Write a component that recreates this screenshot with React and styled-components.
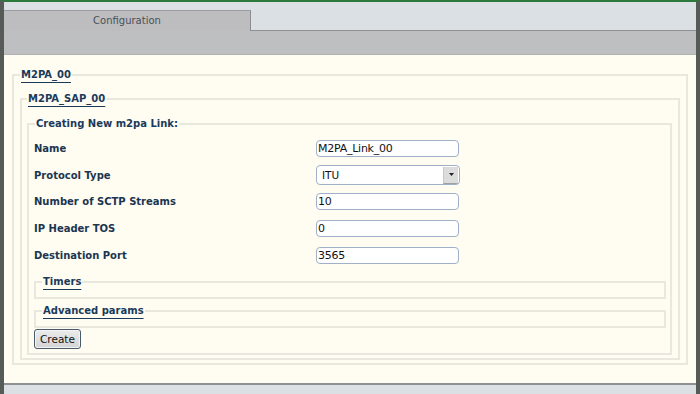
import React from 'react';
import styled, { createGlobalStyle } from 'styled-components';

const GlobalStyle = createGlobalStyle`
  html, body {
    margin: 0;
    padding: 0;
    background: #dae0e4;
  }
`

const Frame = styled.div`
  width: 700px;
  height: 394px;
  box-sizing: border-box;
  border-top: 2px solid #2b7a3c;
  border-left: 4px solid #575b57;
  border-right: 4px solid #575b57;
  display: flex;
  flex-direction: column;
  font-family: "DejaVu Sans", Verdana, sans-serif;
  overflow: hidden;
`

const TabBar = styled.div`
  height: 29px;
  flex: none;
  background: #dae0e4;
  display: flex;
  align-items: flex-end;
`

const Tab = styled.div`
  width: 247px;
  height: 21px;
  box-sizing: border-box;
  background: #bdbdbf;
  border-top: 1px solid #9a9c9e;
  border-right: 1px solid #8a8c8e;
  color: #4a5058;
  font-size: 10px;
  text-align: center;
  padding-top: 4px;
`

const TabFiller = styled.div`
  flex: 1;
  align-self: stretch;
  border-bottom: 1px solid #8e9092;
`

const Band = styled.div`
  height: 23px;
  flex: none;
  background: #bebfc1;
  border-bottom: 1px solid #b0b1b3;
`

const Content = styled.div`
  height: 330px;
  flex: none;
  box-sizing: border-box;
  background: #fffcf2;
  padding: 13px 8px 0 8px;
  border-bottom: 2px solid #8e9092;
`

const BottomBar = styled.div`
  flex: 1;
  background: #dae0e4;
`

const Fieldset = styled.fieldset`
  margin: 0;
  border: 2px solid #e9e8de;
  padding: ${p => p.$pad || '10px 5px 4px 5px'};
  min-width: 0;
`

const Legend = styled.legend`
  padding: 0 1px;
  margin-left: ${p => p.$indent || '0'};
  font-size: 10px;
  font-weight: bold;
  color: #1b3a5a;
  text-decoration: ${p => (p.$plain ? 'none' : 'underline')};
  text-decoration-thickness: 1px;
  text-underline-offset: 4px;
  line-height: 14px;
`

const FormGrid = styled.div`
  display: grid;
  grid-template-columns: 282px 143px;
  grid-auto-rows: 26.8px;
  align-items: center;
  padding: 4px 0 6px 4px;
`

const Label = styled.div`
  font-size: 10px;
  font-weight: bold;
  color: #1b3550;
`

const TextInput = styled.input`
  width: 143px;
  height: 17px;
  box-sizing: border-box;
  border: 1px solid #9fb0c8;
  border-radius: 4px;
  background: #fff;
  font-family: "DejaVu Sans", Verdana, sans-serif;
  font-size: 11px;
  letter-spacing: -0.25px;
  line-height: 15px;
  color: #111;
  padding: 0 1px;
  outline: none;
`

const SelectBox = styled.div`
  width: 144px;
  height: 20px;
  box-sizing: border-box;
  border: 1px solid #9fb0c8;
  border-radius: 4px;
  background: #fff;
  display: flex;
  align-items: center;
  justify-content: space-between;
  font-size: 10.5px;
  color: #111;
  padding-left: 5px;
  overflow: hidden;
`

const SelectArrow = styled.div`
  width: 14px;
  height: 16px;
  background: #dcdcdc;
  border-left: 1px solid #c8c8c8;
  border-bottom: 1px solid #a0a0a0;
  margin-right: 1px;
  display: flex;
  align-items: center;
  justify-content: center;
`

const SubFieldsets = styled.div`
  display: flex;
  flex-direction: column;
  gap: 5px;
  padding-left: 4px;
`

const EmptyFieldset = styled.fieldset`
  margin: 0;
  border: 2px solid #e9e8de;
  padding: 0 0 8px 6px;
  min-width: 0;
`

const Button = styled.button`
  margin: 0 0 0 4px;
  align-self: flex-start;
  height: 20px;
  padding: 0 5px;
  font-family: "DejaVu Sans", Verdana, sans-serif;
  font-size: 10.5px;
  color: #111;
  background: linear-gradient(#ececec, #d4d4d4);
  border: 1px solid #4a5a6a;
  border-radius: 3px;
  box-shadow: inset 0 0 0 1px #f4f4f4;
`

const Row = ({ label, children }) => (
  <>
    <Label>{label}</Label>
    {children}
  </>
)

export default function App() {
  return (
    <>
      <GlobalStyle />
      <Frame>
        <TabBar>
          <Tab>Configuration</Tab>
          <TabFiller />
        </TabBar>
        <Band />
        <Content>
          <Fieldset $pad="10px 6px 3px 6px">
            <Legend>M2PA_00</Legend>
            <Fieldset $pad="11px 6px 3px 5px">
              <Legend>M2PA_SAP_00</Legend>
              <Fieldset $pad="0 4px 4px 1px">
                <Legend $plain $indent="5px">Creating New m2pa Link:</Legend>
                <FormGrid>
                  <Row label="Name">
                    <TextInput defaultValue="M2PA_Link_00" />
                  </Row>
                  <Row label="Protocol Type">
                    <SelectBox>
                      ITU
                      <SelectArrow>
                        <svg width="5" height="3" viewBox="0 0 5 3">
                          <path d="M0 0h5L2.5 3z" fill="#222" />
                        </svg>
                      </SelectArrow>
                    </SelectBox>
                  </Row>
                  <Row label="Number of SCTP Streams">
                    <TextInput defaultValue="10" />
                  </Row>
                  <Row label="IP Header TOS">
                    <TextInput defaultValue="0" />
                  </Row>
                  <Row label="Destination Port">
                    <TextInput defaultValue="3565" />
                  </Row>
                </FormGrid>
                <SubFieldsets>
                  <EmptyFieldset>
                    <Legend>Timers</Legend>
                  </EmptyFieldset>
                  <EmptyFieldset>
                    <Legend>Advanced params</Legend>
                  </EmptyFieldset>
                </SubFieldsets>
                <Button>Create</Button>
              </Fieldset>
            </Fieldset>
          </Fieldset>
        </Content>
        <BottomBar />
      </Frame>
    </>
  );
}
